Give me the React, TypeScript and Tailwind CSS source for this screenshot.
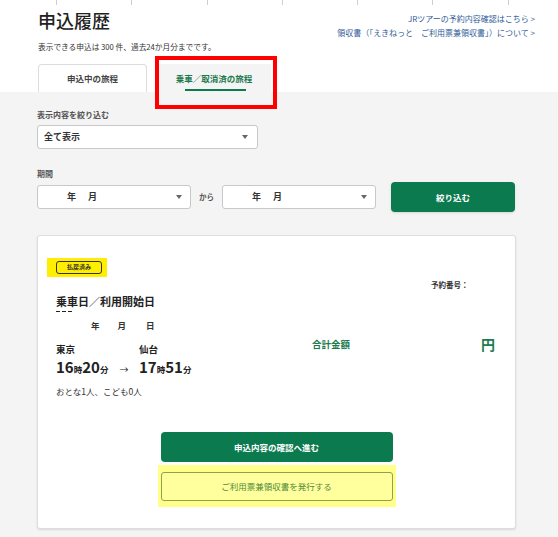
import React from 'react';

const GREEN = 'bg-[#0b7a4e]';

const Caret = () => (
  <svg width="6" height="4" viewBox="0 0 6 4" className="shrink-0">
    <polygon points="0,0 6,0 3,4" fill="#666" />
  </svg>
);

const PeriodSelect = () => (
  <div className="flex h-[24px] w-[154px] items-center justify-between rounded-[3px] border border-[#c8c8c8] bg-white pl-[29px] pr-[8px] text-[9px] font-bold text-[#333]">
    <span>
      年<span className="ml-[12px]">月</span>
    </span>
    <Caret />
  </div>
);

export default function App() {
  return (
    <div className="relative h-[537px] w-[558px] overflow-hidden bg-[#f4f4f4] font-['Noto_Sans_CJK_JP','Noto_Sans',sans-serif] text-[#333]">
      {/* header */}
      <div className="bg-white">
        <div className="flex h-[5px] pl-[56px]">
          {[0, 1, 2, 3, 4, 5, 6].map((i) => (
            <div key={i} className="w-[75.3px] shrink-0 border-l border-[#cfcfcf]" />
          ))}
        </div>
        <div className="flex justify-between pl-[38px] pr-[23px]">
          <div>
            <h1 className="mt-[3px] text-[18px] font-medium leading-[24px] text-[#222]">申込履歴</h1>
            <p className="mt-[10px] text-[7.7px] leading-[10px] text-[#333]">
              表示できる申込は 300 件、過去24か月分までです。
            </p>
          </div>
          <div className="pt-[7px] text-right text-[8px] leading-[14px] text-[#2f5b98]">
            <p>JRツアーの予約内容確認はこちら &gt;</p>
            <p>領収書（「えきねっと　ご利用票兼領収書」）について &gt;</p>
          </div>
        </div>
        <div className="mt-[12px] flex items-end gap-[10px] pl-[38px]">
          <div className="flex h-[28px] w-[109px] items-center justify-center rounded-t-[4px] border border-b-0 border-[#dcdcdc] bg-white text-[8.5px] font-bold text-[#444]">
            申込中の旅程
          </div>
          <div className="relative flex h-[28px] w-[114px] items-center justify-center bg-[#f4f4f4] text-[8.5px] font-bold text-[#1c7a4f]">
            乗車／取消済の旅程
            <div className="absolute bottom-[1px] left-[28px] h-[2.5px] w-[61px] bg-[#0b7a4e]" />
          </div>
        </div>
      </div>

      {/* filter area */}
      <div className="pl-[37px] pr-[43px] pt-[17px]">
        <p className="text-[8px] font-bold leading-[12px] text-[#555]">表示内容を絞り込む</p>
        <div className="mt-[4px] flex h-[24px] w-[221px] items-center justify-between rounded-[3px] border border-[#c8c8c8] bg-white pl-[6px] pr-[9px] text-[9px] font-bold text-[#333]">
          <span>全て表示</span>
          <Caret />
        </div>
        <p className="mt-[19px] text-[8px] font-bold leading-[12px] text-[#555]">期間</p>
        <div className="mt-[2px] flex h-[30px] items-center">
          <PeriodSelect />
          <span className="ml-[8px] mr-[8px] text-[7.5px] font-bold text-[#555]">から</span>
          <PeriodSelect />
          <button className={`ml-[15px] h-[30px] w-[124px] rounded-[4px] ${GREEN} text-[8.5px] font-bold text-white shadow-sm`}>
            絞り込む
          </button>
        </div>

        {/* card */}
        <div className="mt-[23px] h-[294px] w-[479px] rounded-[3px] border border-[#dedede] bg-white px-[18px] shadow-[0_1px_2px_rgba(0,0,0,0.12)]">
          <div className="pt-[14px]">
            <div className="-ml-[9px] inline-flex bg-[#ffee00] py-[3px] pl-[9px] pr-[5px]">
              <span className="flex h-[13px] w-[46px] items-center justify-center rounded-[3px] border-[1.5px] border-[#333] text-[6px] font-bold leading-none text-[#333]">
                払戻済み
              </span>
            </div>
          </div>
          <div className="flex">
            <div className="w-[256px]">
              <p className="pt-[17px] text-[11px] font-bold leading-[14px] text-[#222]">乗車日／利用開始日</p>
              <div className="mt-[3px] flex gap-[2px]">
                <span className="h-[1.5px] w-[4px] bg-[#222]" />
                <span className="h-[1.5px] w-[4px] bg-[#222]" />
                <span className="h-[1.5px] w-[4px] bg-[#222]" />
              </div>
              <p className="mt-[7px] pl-[35px] text-[8.5px] font-bold leading-[12px] text-[#333]">
                年<span className="ml-[18px]">月</span>
                <span className="ml-[20px]">日</span>
              </p>
              <div className="mt-[12px] flex text-[9.5px] font-bold leading-[12px] text-[#222]">
                <span className="w-[83px]">東京</span>
                <span>仙台</span>
              </div>
              <div className="mt-[2px] flex items-baseline font-bold leading-[20px] text-[#222]">
                <span className="flex w-[83px] items-baseline">
                  <span className="text-[15px]">16</span>
                  <span className="text-[8.5px]">時</span>
                  <span className="text-[15px]">20</span>
                  <span className="text-[8.5px]">分</span>
                  <span className="ml-[11px] text-[9px] font-normal">→</span>
                </span>
                <span className="text-[15px]">17</span>
                <span className="text-[8.5px]">時</span>
                <span className="text-[15px]">51</span>
                <span className="text-[8.5px]">分</span>
              </div>
              <p className="mt-[5px] text-[8.5px] leading-[12px] text-[#333]">おとな1人、こども0人</p>
            </div>
            <div className="flex-1">
              <p className="pt-[2px] pl-[119px] text-[7.5px] font-bold leading-[12px] text-[#333]">予約番号：</p>
              <div className="mt-[44px] flex h-[20px] items-center justify-between pr-[2px]">
                <span className="text-[9.5px] font-bold text-[#1c7a4f]">合計金額</span>
                <span className="text-[14px] font-bold text-[#1c7a4f]">円</span>
              </div>
            </div>
          </div>
          <div className="mt-[35px] flex flex-col items-center">
            <button className={`h-[30px] w-[232px] rounded-[4px] ${GREEN} text-[8.5px] font-bold text-white`}>
              申込内容の確認へ進む
            </button>
            <div className="mt-[3px] bg-[#ffff8a] px-[3px] py-[6px]">
              <button className="h-[29px] w-[232px] rounded-[3px] border border-[#8ea24a] bg-[#ffff9e] text-[8.5px] text-[#4f8a36]">
                ご利用票兼領収書を発行する
              </button>
            </div>
          </div>
        </div>
      </div>

      {/* annotation */}
      <div className="pointer-events-none absolute left-[155px] top-[56px] h-[53px] w-[122px] border-[4px] border-[#ff0000]" />
    </div>
  );
}
